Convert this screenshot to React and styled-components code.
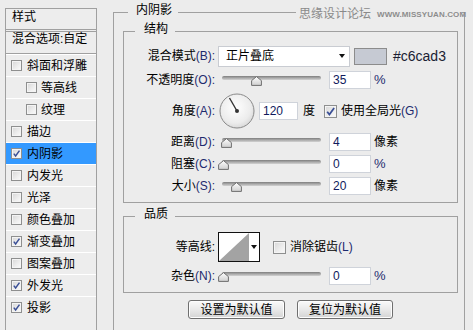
import React from 'react';
import styled, { createGlobalStyle } from 'styled-components';

const GlobalStyle = createGlobalStyle`
  html, body { margin: 0; padding: 0; background: #ececec; }
  body {
    width: 473px; height: 330px; overflow: hidden;
    font-family: "Liberation Sans", "Noto Sans CJK SC", sans-serif;
    font-size: 12px; color: #000;
  }
`;

const Page = styled.div`
  position: relative;
  display: flex;
  align-items: flex-start;
  width: 473px;
  height: 330px;
  overflow: hidden;
`;

/* ---------- left styles list ---------- */
const StylesPanel = styled.div`
  flex-shrink: 0;
  box-sizing: border-box;
  width: 92px;
  height: 340px;
  margin: 8px 0 0 5px;
  border: 1px solid #a0a0a0;
  background: #ededed;
`;

const PanelHeader = styled.div`
  height: 20px;
  padding-left: 6px;
  line-height: 16px;
  border-bottom: 3px double #a0a0a0;
`;

const BlendRow = styled.div`
  height: 21px;
  padding-left: 6px;
  line-height: 14px;
  white-space: nowrap;
  border-bottom: 1px solid #a0a0a0;
`;

const StyleItem = styled.div`
  display: flex;
  align-items: center;
  gap: ${p => (p.$indent ? 4 : 5)}px;
  height: 21px;
  padding-left: ${p => (p.$indent ? 20 : 5)}px;
  border-top: 1px solid #ffffff;
  background: ${p => (p.$selected ? '#3399ff' : 'transparent')};
  line-height: 14px;
  white-space: nowrap;
`;

const Box = styled.span`
  position: relative;
  flex-shrink: 0;
  box-sizing: border-box;
  display: inline-flex;
  align-items: center;
  justify-content: center;
  width: ${p => p.$size}px;
  height: ${p => p.$size}px;
  border: 1px solid #8e8f8f;
  background: linear-gradient(135deg, #d6d6d6 0%, #eeeeee 60%, #fbfbfb 100%);
  box-shadow: inset 0 0 0 1px #f4f4f4;
`;

const Check = ({ size = 11, checked }) => (
  <Box $size={size}>
    {checked && (
      <svg width={size - 2} height={size - 2} viewBox="0 0 10 10">
        <path d="M2 5.2 L4 7.8 L8.3 1.8" fill="none" stroke="#3a4f96" strokeWidth="1.6" />
      </svg>
    )}
  </Box>
);

/* ---------- right side groups ---------- */
const OuterGroup = styled.div`
  position: relative;
  flex-shrink: 0;
  box-sizing: border-box;
  width: 352px;
  height: 340px;
  margin: 12px 0 0 16px;
  padding: 18px 6px 0 9px;
  border: 1px solid #a0a0a0;
`;

const Group = styled.div`
  position: relative;
  box-sizing: border-box;
  width: 335px;
  margin-top: ${p => p.$mt || 0}px;
  padding: ${p => p.$pad};
  border: 1px solid #a0a0a0;
`;

const GroupTitle = styled.span`
  position: absolute;
  top: -10px;
  left: ${p => p.$left}px;
  padding: 0 ${p => p.$pr}px 0 ${p => p.$pl}px;
  background: #ececec;
  line-height: 14px;
  white-space: nowrap;
`;

const Watermark = styled.div`
  position: absolute;
  left: 296px;
  top: 4px;
  width: 166px;
  height: 20px;
  display: flex;
  align-items: center;
  gap: 6px;
  padding-left: 3px;
  box-sizing: border-box;
  background: #ececec;
  white-space: nowrap;
`;

const WmCn = styled.span`
  color: #8a8a8a;
  font-size: 12px;
  line-height: 14px;
`;

const WmEn = styled.span`
  color: #8c8c8c;
  font-size: 8px;
  font-weight: bold;
  letter-spacing: 0.1px;
  padding-top: 1px;
`;

const FieldRow = styled.div`
  display: flex;
  align-items: center;
  height: ${p => p.$h || 18}px;
  margin-top: ${p => p.$mt ?? 4}px;
  white-space: nowrap;
`;

const Label = styled.div`
  flex-shrink: 0;
  width: 91px;
  margin-right: 3px;
  text-align: right;
  line-height: 14px;
`;

const Accel = styled.span`
  color: #1e2a6e;
`;

const Select = styled.div`
  box-sizing: border-box;
  display: flex;
  align-items: center;
  justify-content: space-between;
  width: 132px;
  height: 21px;
  padding: 0 4px 0 7px;
  background: #fff;
  border: 1px solid #c9ccd2;
  line-height: 14px;
`;

const Arrow = styled.span`
  width: 0;
  height: 0;
  border-left: 3.5px solid transparent;
  border-right: 3.5px solid transparent;
  border-top: 4px solid #111;
`;

const Swatch = styled.div`
  box-sizing: border-box;
  width: 33px;
  height: 17px;
  margin-left: 4px;
  background: #c6cad3;
  border: 1px solid #8c8c8c;
`;

const HexText = styled.span`
  margin-left: 6px;
  font-size: 14px;
  color: #1a1d33;
`;

const NumInput = styled.div`
  box-sizing: border-box;
  flex-shrink: 0;
  width: ${p => p.$w || 42}px;
  height: 18px;
  margin-left: ${p => p.$ml ?? 7}px;
  padding-left: 3px;
  background: #fff;
  border: 1px solid #cfd3da;
  color: #101a5c;
  font-size: 12px;
  line-height: 16px;
`;

const Unit = styled.span`
  margin-left: ${p => p.$ml ?? 3}px;
  line-height: 14px;
  color: ${p => (p.$latin ? '#1e2a6e' : '#000')};
  font-size: ${p => (p.$latin ? 13 : 12)}px;
`;

const SliderWrap = styled.div`
  position: relative;
  flex-shrink: 0;
  width: 104px;
  height: 18px;
`;

const Track = styled.div`
  position: absolute;
  left: 4px;
  right: 1px;
  top: 5px;
  height: 4px;
  border-radius: 2px;
  background: linear-gradient(#7e7e7e, #a9a9a9 50%, #d2d2d2);
`;

const Thumb = styled.svg`
  position: absolute;
  top: 5px;
`;

const Slider = ({ at }) => (
  <SliderWrap>
    <Track />
    <Thumb width="11" height="10" viewBox="0 0 11 10" style={{ left: at - 5.5 }}>
      <defs>
        <linearGradient id={`tg${at}`} x1="0" y1="0" x2="0" y2="1">
          <stop offset="0" stopColor="#ffffff" />
          <stop offset="1" stopColor="#cfcfcf" />
        </linearGradient>
      </defs>
      <path d="M5.5 0.6 L10.4 4.6 L10.4 9.4 L0.6 9.4 L0.6 4.6 Z" fill={`url(#tg${at})`} stroke="#6e6e6e" strokeWidth="1" />
    </Thumb>
  </SliderWrap>
);

const Dial = () => (
  <svg width="36" height="36" viewBox="0 0 36 36" style={{ marginLeft: 1, flexShrink: 0 }}>
    <defs>
      <radialGradient id="dialg" cx="0.45" cy="0.4" r="0.65">
        <stop offset="0" stopColor="#ffffff" />
        <stop offset="0.7" stopColor="#ececec" />
        <stop offset="1" stopColor="#d4d4d4" />
      </radialGradient>
    </defs>
    <circle cx="18" cy="18" r="17" fill="url(#dialg)" stroke="#8a8a8a" strokeWidth="1" />
    <line x1="18" y1="18" x2="10.5" y2="5" stroke="#333" strokeWidth="1.4" />
    <circle cx="18" cy="18" r="2" fill="#333" />
  </svg>
);

const ContourBox = styled.div`
  box-sizing: border-box;
  display: flex;
  width: 42px;
  height: 30px;
  border: 1px solid #111;
  background: #fff;
`;

const ContourArrow = styled.div`
  flex: 1;
  display: flex;
  align-items: center;
  justify-content: center;
`;

const CheckLabel = styled.span`
  margin-left: 4px;
  line-height: 14px;
`;

const ButtonRow = styled.div`
  display: flex;
  justify-content: center;
  gap: 12px;
  margin-top: 7px;
`;

const Button = styled.div`
  box-sizing: border-box;
  width: ${p => p.$w}px;
  height: 19px;
  display: flex;
  align-items: center;
  justify-content: center;
  border: 1px solid #6f6f6f;
  border-radius: 3px;
  background: linear-gradient(#fafafa, #e9e9e9 50%, #d4d4d4);
  box-shadow: inset 0 0 0 1px #fdfdfd;
  line-height: 14px;
`;

const styleItems = [
  { name: '斜面和浮雕', checked: false },
  { name: '等高线', checked: false, indent: true },
  { name: '纹理', checked: false, indent: true },
  { name: '描边', checked: false },
  { name: '内阴影', checked: true, selected: true },
  { name: '内发光', checked: false },
  { name: '光泽', checked: false },
  { name: '颜色叠加', checked: false },
  { name: '渐变叠加', checked: true },
  { name: '图案叠加', checked: false },
  { name: '外发光', checked: true },
  { name: '投影', checked: true },
];

const sliders = [
  { label: '距离', key: 'D', at: 8.5, value: '4', unit: '像素' },
  { label: '阻塞', key: 'C', at: 5, value: '0', unit: '%' },
  { label: '大小', key: 'S', at: 18, value: '20', unit: '像素' },
];

export default function App() {
  return (
    <Page>
      <GlobalStyle />
      <StylesPanel>
        <PanelHeader>样式</PanelHeader>
        <BlendRow>混合选项:自定</BlendRow>
        {styleItems.map(it => (
          <StyleItem key={it.name} $indent={it.indent} $selected={it.selected}>
            <Check size={11} checked={it.checked} />
            <span>{it.name}</span>
          </StyleItem>
        ))}
      </StylesPanel>

      <OuterGroup>
        <GroupTitle $left={14} $pl={8} $pr={6}>内阴影</GroupTitle>

        <Group $pad="13px 0 7px 0">
          <GroupTitle $left={11} $pl={9} $pr={7}>结构</GroupTitle>

          <FieldRow $h={22} $mt={0}>
            <Label>混合模式<Accel>(B):</Accel></Label>
            <Select>
              <span>正片叠底</span>
              <Arrow />
            </Select>
            <Swatch />
            <HexText>#c6cad3</HexText>
          </FieldRow>

          <FieldRow>
            <Label>不透明度<Accel>(O):</Accel></Label>
            <Slider at={38} />
            <NumInput>35</NumInput>
            <Unit $latin>%</Unit>
          </FieldRow>

          <FieldRow $h={36}>
            <Label>角度<Accel>(A):</Accel></Label>
            <Dial />
            <NumInput $w={39} $ml={4}>120</NumInput>
            <Unit $ml={5}>度</Unit>
            <span style={{ marginLeft: 9, display: 'inline-flex' }}>
              <Check size={13} checked />
            </span>
            <CheckLabel>使用全局光<Accel>(G)</Accel></CheckLabel>
          </FieldRow>

          {sliders.map(s => (
            <FieldRow key={s.key}>
              <Label>{s.label}<Accel>({s.key}):</Accel></Label>
              <Slider at={s.at} />
              <NumInput>{s.value}</NumInput>
              <Unit $latin={s.unit === '%'}>{s.unit}</Unit>
            </FieldRow>
          ))}
        </Group>

        <Group $mt={13} $pad="15px 0 7px 0">
          <GroupTitle $left={11} $pl={9} $pr={7}>品质</GroupTitle>

          <FieldRow $h={30} $mt={0}>
            <Label>等高线:</Label>
            <ContourBox>
              <svg width="30" height="28" viewBox="0 0 30 28">
                <polygon points="0,28 30,0 30,28" fill="#a3a3a3" />
              </svg>
              <ContourArrow>
                <Arrow />
              </ContourArrow>
            </ContourBox>
            <span style={{ marginLeft: 13, display: 'inline-flex' }}>
              <Check size={13} checked={false} />
            </span>
            <CheckLabel>消除锯齿<Accel>(L)</Accel></CheckLabel>
          </FieldRow>

          <FieldRow $mt={5}>
            <Label>杂色<Accel>(N):</Accel></Label>
            <Slider at={5} />
            <NumInput>0</NumInput>
            <Unit $latin>%</Unit>
          </FieldRow>
        </Group>

        <ButtonRow>
          <Button $w={97}>设置为默认值</Button>
          <Button $w={96}>复位为默认值</Button>
        </ButtonRow>
      </OuterGroup>

      <Watermark>
        <WmCn>思缘设计论坛</WmCn>
        <WmEn>WWW.MISSYUAN.COM</WmEn>
      </Watermark>
    </Page>
  );
}
